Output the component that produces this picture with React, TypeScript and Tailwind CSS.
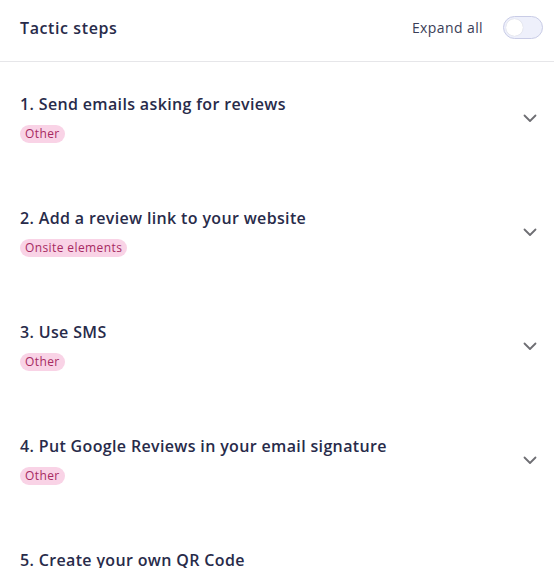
import React from "react";

const steps = [
  { title: "1. Send emails asking for reviews", tag: "Other" },
  { title: "2. Add a review link to your website", tag: "Onsite elements" },
  { title: "3. Use SMS", tag: "Other" },
  { title: "4. Put Google Reviews in your email signature", tag: "Other" },
  { title: "5. Create your own QR Code", tag: "Other" },
];

const Chevron = () => (
  <svg width="16" height="16" viewBox="0 0 16 16" fill="none" className="text-[#6e6e73]">
    <path d="M2.5 5.5L8 11l5.5-5.5" stroke="currentColor" strokeWidth="1.8" strokeLinecap="round" strokeLinejoin="round" />
  </svg>
);

export default function App() {
  return (
    <div className="w-[554px] h-[568px] overflow-hidden bg-white font-['Open_Sans',sans-serif] text-[#282b4a]">
      <div className="h-[62px] flex items-center justify-between pl-5 pr-[11px] pb-[6px] border-b border-[#e6e6e9]">
        <h1 className="text-[16px] font-semibold tracking-[0.6px]">Tactic steps</h1>
        <div className="flex items-center gap-[20px]">
          <span className="text-[14px] tracking-[0.4px] text-[#3a3d57]">Expand all</span>
          <button className="w-[40px] h-[23px] rounded-full bg-[#eef0fb] border border-[#c9cce6] flex items-center px-[2px]">
            <span className="w-[17px] h-[17px] rounded-full bg-white shadow-[0_0_1px_rgba(0,0,0,0.2)]" />
          </button>
        </div>
      </div>
      <div className="flex flex-col">
        {steps.map((s) => (
          <div key={s.title} className="h-[114px] flex items-start justify-between pl-5 pr-4 pt-[30px]">
            <div className="flex flex-col items-start gap-[9px]">
              <h2 className="text-[16px] font-semibold leading-6 tracking-[0.35px] whitespace-nowrap">{s.title}</h2>
              <span className="rounded-full bg-[#f9d3e6] text-[#a72a62] text-[12px] leading-[18px] px-[5px] tracking-[0.4px]">{s.tag}</span>
            </div>
            <div className="mt-[18px]">
              <Chevron />
            </div>
          </div>
        ))}
      </div>
    </div>
  );
}
